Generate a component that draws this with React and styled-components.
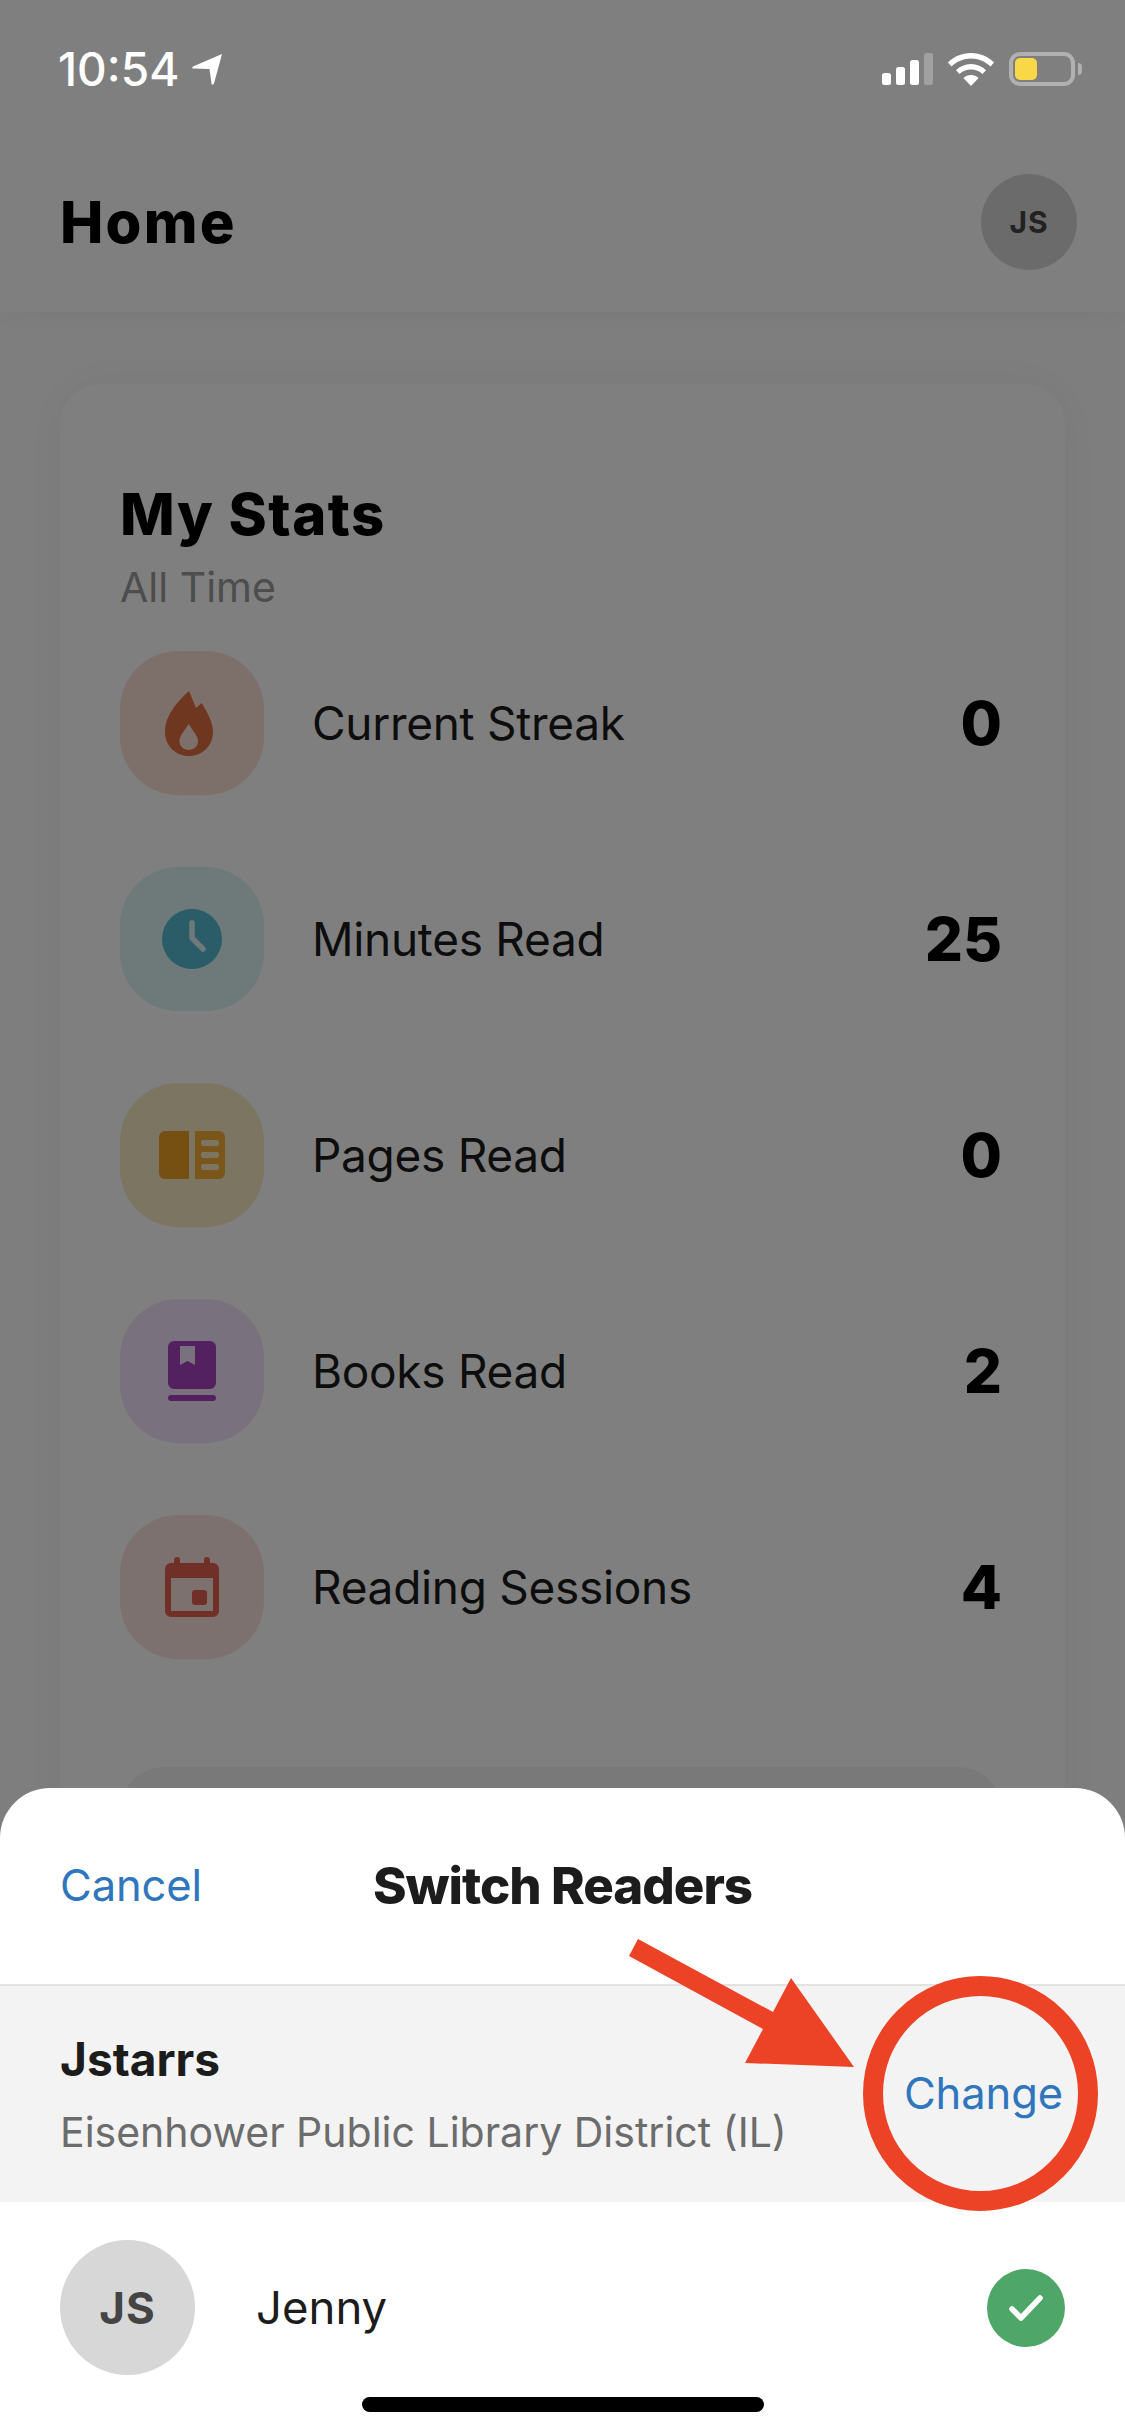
import React from 'react';
import styled, { createGlobalStyle } from 'styled-components';

const GlobalStyle = createGlobalStyle`
  html, body {
    margin: 0;
    padding: 0;
    background: #fff;
  }
  * {
    box-sizing: border-box;
  }
`;

const Screen = styled.div`
  position: relative;
  width: 1125px;
  height: 2436px;
  overflow: hidden;
  background: #fdfdfd;
  font-family: Inter, 'Liberation Sans', sans-serif;
  color: #000;
`;

const Header = styled.header`
  position: relative;
  height: 312px;
  padding: 174px 48px 0 60px;
  display: flex;
  align-items: flex-start;
  justify-content: space-between;
  background: #ffffff;
  box-shadow: 0 2px 30px rgba(0, 0, 0, 0.05);
`;

const PageTitle = styled.h1`
  margin: 0;
  height: 96px;
  line-height: 96px;
  font-size: 58px;
  font-weight: 800;
  letter-spacing: 2.2px;
`;

const Avatar = styled.div`
  width: ${(p) => p.$size}px;
  height: ${(p) => p.$size}px;
  flex: none;
  border-radius: 50%;
  background: #d7d7d7;
  color: #444;
  display: flex;
  align-items: center;
  justify-content: center;
  font-size: ${(p) => p.$font}px;
  font-weight: 700;
  letter-spacing: 1px;
`;

const Card = styled.section`
  margin: 72px 60px 0;
  height: 1500px;
  padding: 96px 63px 0 60px;
  border-radius: 40px;
  background: #ffffff;
  box-shadow: 0 0 50px rgba(0, 0, 0, 0.05);
`;

const CardTitle = styled.h2`
  margin: 0;
  font-size: 58px;
  line-height: 68px;
  font-weight: 800;
  letter-spacing: 1.5px;
`;

const CardSub = styled.div`
  margin-top: 14px;
  font-size: 41px;
  line-height: 50px;
  color: #9a9a9a;
`;

const StatList = styled.div`
  margin-top: 39px;
  display: flex;
  flex-direction: column;
  gap: 72px;
`;

const StatRow = styled.div`
  height: 144px;
  display: flex;
  align-items: center;
`;

const Tile = styled.div`
  width: 144px;
  height: 144px;
  flex: none;
  border-radius: 58px;
  background: ${(p) => p.$bg};
  display: flex;
  align-items: center;
  justify-content: center;
`;

const StatLabel = styled.div`
  margin-left: 48px;
  flex: 1;
  font-size: 46px;
  letter-spacing: -0.3px;
  color: #1a1a1a;
`;

const StatValue = styled.div`
  font-size: 60px;
  font-weight: 800;
`;

const CardButton = styled.div`
  margin-top: 108px;
  height: 130px;
  border-radius: 44px;
  background: #f2f2f2;
`;

const Scrim = styled.div`
  position: absolute;
  inset: 0;
  background: rgba(0, 0, 0, 0.5);
`;

const StatusBar = styled.div`
  position: absolute;
  top: 52px;
  left: 58px;
  right: 43px;
  height: 34px;
  display: flex;
  align-items: center;
  justify-content: space-between;
  color: #fff;
`;

const Clock = styled.div`
  display: flex;
  align-items: center;
  gap: 13px;
  font-size: 46px;
  font-weight: 500;
  line-height: 34px;
`;

const StatusIcons = styled.div`
  display: flex;
  align-items: center;
  gap: 15px;
`;

const Battery = styled.div`
  position: relative;
  width: 66px;
  height: 34px;
  margin-right: 7px;
  padding: 2px;
  border: 4px solid #b0b0b0;
  border-radius: 11px;

  &::before {
    content: '';
    display: block;
    width: 22px;
    height: 22px;
    border-radius: 5px;
    background: #f8d848;
  }

  &::after {
    content: '';
    position: absolute;
    top: 7px;
    right: -11px;
    width: 4px;
    height: 12px;
    border-radius: 0 6px 6px 0;
    background: #b0b0b0;
  }
`;

const Sheet = styled.div`
  position: absolute;
  left: 0;
  right: 0;
  bottom: 0;
  height: 648px;
  border-radius: 50px 50px 0 0;
  background: #fff;
  overflow: hidden;
`;

const SheetHeader = styled.div`
  height: 198px;
  padding: 0 60px 2px 60px;
  display: grid;
  grid-template-columns: 1fr auto 1fr;
  align-items: center;
  border-bottom: 2px solid #e2e2e2;
`;

const LinkText = styled.div`
  font-size: 43.5px;
  letter-spacing: -0.1px;
  color: #2f76bd;
`;

const ChangeLink = styled(LinkText)`
  margin-bottom: 3px;
`;

const SheetTitle = styled.div`
  font-size: 51px;
  font-weight: 800;
  letter-spacing: -1px;
  color: #1c1c1c;
`;

const LibraryRow = styled.div`
  height: 216px;
  padding: 0 62px 0 60px;
  display: flex;
  align-items: center;
  justify-content: space-between;
  background: #f3f3f3;
`;

const LibraryName = styled.div`
  font-size: 46px;
  font-weight: 700;
  line-height: 56px;
  color: #1c1c1c;
`;

const LibrarySub = styled.div`
  margin-top: 20px;
  font-size: 41px;
  line-height: 50px;
  color: #6c6c6c;
`;

const ReaderRow = styled.div`
  padding: 38px 60px 0;
  display: flex;
  align-items: center;
`;

const ReaderName = styled.div`
  margin-left: 61px;
  flex: 1;
  font-size: 45.5px;
  color: #1c1c1c;
`;

const Check = styled.div`
  width: 78px;
  height: 78px;
  border-radius: 50%;
  background: #4ea668;
  display: flex;
  align-items: center;
  justify-content: center;
`;

const HomeBar = styled.div`
  position: absolute;
  left: 362px;
  bottom: 24px;
  width: 402px;
  height: 15px;
  border-radius: 8px;
  background: #000;
`;

const Annotation = styled.svg`
  position: absolute;
  left: 620px;
  top: 1930px;
`;

const FlameIcon = () => (
  <svg width="72" height="72" viewBox="0 0 72 72">
    <path
      fillRule="evenodd"
      fill="#de6c40"
      d="M33 4 L40 21 L45.7 16 C51 25 57 35 57 45 C57 59 46 69 33 69 C20 69 9 59 9 45 C9 28 22 14 33 4 Z M32.7 37 C28 44 23.5 49 23.5 54 C23.5 59.5 27.7 63 32.7 63 C37.7 63 42 59.5 42 54 C42 49 37 44 32.7 37 Z"
    />
  </svg>
);

const ClockIcon = () => (
  <svg width="72" height="72" viewBox="0 0 72 72">
    <circle cx="36" cy="36" r="30" fill="#56bad0" />
    <path d="M36 20 V35 L47 46" fill="none" stroke="#dcf2f4" strokeWidth="5.5" strokeLinecap="round" strokeLinejoin="round" />
  </svg>
);

const PagesIcon = () => (
  <svg width="72" height="72" viewBox="0 0 72 72">
    <path fill="#ec9f26" d="M9 12 H33 V60 H9 a6 6 0 0 1 -6 -6 V18 a6 6 0 0 1 6 -6 Z" />
    <path
      fillRule="evenodd"
      fill="#f4ad35"
      d="M39 12 H63 a6 6 0 0 1 6 6 V54 a6 6 0 0 1 -6 6 H39 Z M47 21 a2 2 0 0 0 -2 2 v2 a2 2 0 0 0 2 2 H61 a2 2 0 0 0 2 -2 v-2 a2 2 0 0 0 -2 -2 Z M47 33 a2 2 0 0 0 -2 2 v2 a2 2 0 0 0 2 2 H61 a2 2 0 0 0 2 -2 v-2 a2 2 0 0 0 -2 -2 Z M47 45 a2 2 0 0 0 -2 2 v2 a2 2 0 0 0 2 2 H61 a2 2 0 0 0 2 -2 v-2 a2 2 0 0 0 -2 -2 Z"
    />
  </svg>
);

const BookIcon = () => (
  <svg width="72" height="72" viewBox="0 0 72 72">
    <path
      fillRule="evenodd"
      fill="#a642be"
      d="M18 6 H54 a6 6 0 0 1 6 6 V48 a6 6 0 0 1 -6 6 H18 a6 6 0 0 1 -6 -6 V12 a6 6 0 0 1 6 -6 Z M24 11 V30 L31.5 26 L39 30 V11 Z"
    />
    <rect x="12" y="60" width="48" height="6" rx="3" fill="#a642be" />
  </svg>
);

const CalendarIcon = () => (
  <svg width="72" height="72" viewBox="0 0 72 72">
    <path
      fillRule="evenodd"
      fill="#e06050"
      d="M15 12 H57 a6 6 0 0 1 6 6 V60 a6 6 0 0 1 -6 6 H15 a6 6 0 0 1 -6 -6 V18 a6 6 0 0 1 6 -6 Z M15 27 V60 H57 V27 Z"
    />
    <rect x="18" y="6" width="6" height="12" rx="3" fill="#e06050" />
    <rect x="48" y="6" width="6" height="12" rx="3" fill="#e06050" />
    <rect x="36" y="39" width="15" height="15" rx="3" fill="#e06050" />
  </svg>
);

const stats = [
  { label: 'Current Streak', value: '0', bg: '#fae0d6', Icon: FlameIcon },
  { label: 'Minutes Read', value: '25', bg: '#dcf2f4', Icon: ClockIcon },
  { label: 'Pages Read', value: '0', bg: '#f8eac4', Icon: PagesIcon },
  { label: 'Books Read', value: '2', bg: '#f4e2ff', Icon: BookIcon },
  { label: 'Reading Sessions', value: '4', bg: '#fae2e0', Icon: CalendarIcon },
];

const App = () => {
  return (
    <Screen>
      <GlobalStyle />
      <Header>
        <PageTitle>Home</PageTitle>
        <Avatar $size={96} $font={30}>JS</Avatar>
      </Header>

      <Card>
        <CardTitle>My Stats</CardTitle>
        <CardSub>All Time</CardSub>
        <StatList>
          {stats.map(({ label, value, bg, Icon }) => (
            <StatRow key={label}>
              <Tile $bg={bg}>
                <Icon />
              </Tile>
              <StatLabel>{label}</StatLabel>
              <StatValue>{value}</StatValue>
            </StatRow>
          ))}
        </StatList>
        <CardButton />
      </Card>

      <Scrim />

      <StatusBar>
        <Clock>
          10:54
          <svg width="30" height="31" viewBox="0 0 30 31">
            <path fill="#fff" d="M30 0 L22 29.5 C21.5 31 19.5 31 19.5 29.5 L17.5 15 L1 14.5 C0 14.5 0 13 1 12.5 Z" />
          </svg>
        </Clock>
        <StatusIcons>
          <svg width="51" height="32" viewBox="0 0 51 32">
            <rect x="0" y="20" width="9" height="12" rx="2.5" fill="#fff" />
            <rect x="14" y="14" width="9" height="18" rx="2.5" fill="#fff" />
            <rect x="28" y="7" width="9" height="25" rx="2.5" fill="#fff" />
            <rect x="42" y="0" width="9" height="32" rx="2.5" fill="#a0a0a0" />
          </svg>
          <svg width="46" height="33" viewBox="0 0 46 33">
            <path fill="#fff" d="M23 0 C32 0 40 3.5 46 9.5 L42.5 13.5 C37.5 8.5 30.5 5.5 23 5.5 C15.5 5.5 8.5 8.5 3.5 13.5 L0 9.5 C6 3.5 14 0 23 0 Z" />
            <path fill="#fff" d="M23 11 C29 11 34 13.3 38 17.2 L34.5 21 C31.5 18.2 27.5 16.5 23 16.5 C18.5 16.5 14.5 18.2 11.5 21 L8 17.2 C12 13.3 17 11 23 11 Z" />
            <path fill="#fff" d="M23 22 C26 22 28.6 23.1 30.6 25 L23 33 L15.4 25 C17.4 23.1 20 22 23 22 Z" />
          </svg>
          <Battery />
        </StatusIcons>
      </StatusBar>

      <Sheet>
        <SheetHeader>
          <LinkText>Cancel</LinkText>
          <SheetTitle>Switch Readers</SheetTitle>
        </SheetHeader>
        <LibraryRow>
          <div>
            <LibraryName>Jstarrs</LibraryName>
            <LibrarySub>Eisenhower Public Library District (IL)</LibrarySub>
          </div>
          <ChangeLink>Change</ChangeLink>
        </LibraryRow>
        <ReaderRow>
          <Avatar $size={135} $font={44}>JS</Avatar>
          <ReaderName>Jenny</ReaderName>
          <Check>
            <svg width="36" height="28" viewBox="0 0 36 28">
              <path d="M4 15 L13 24 L32 4" fill="none" stroke="#fff" strokeWidth="5.5" strokeLinecap="round" strokeLinejoin="round" />
            </svg>
          </Check>
        </ReaderRow>
        <HomeBar />
      </Sheet>

      <Annotation width="500" height="290" viewBox="620 1930 500 290">
        <path fill="#ec4225" d="M638 1939 L773 2012 L791 1978 L854 2067 L745 2063 L763 2029 L629 1956 Z" />
        <circle cx="980.5" cy="2093.5" r="107.5" fill="none" stroke="#ec4225" strokeWidth="20" />
      </Annotation>
    </Screen>
  );
};

export default App;
